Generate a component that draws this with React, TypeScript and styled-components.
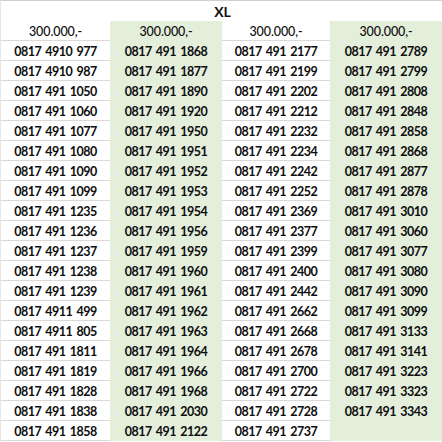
import React from "react";
import styled, { createGlobalStyle } from "styled-components";

const GlobalStyle = createGlobalStyle`
    html, body {
        margin: 0;
        padding: 0;
        background: #ffffff;
    }
    body {
        font-family: Lato, "Liberation Sans", sans-serif;
        color: #111111;
    }
`;

const prefix = "0817 491 ";

const columns: { shaded: boolean; numbers: string[] }[] = [
    {
        shaded: false,
        numbers: [
            "0817 4910 977",
            "0817 4910 987",
            ...["1050", "1060", "1077", "1080", "1090", "1099", "1235", "1236", "1237", "1238", "1239"].map(
                (n) => prefix + n
            ),
            "0817 4911 499",
            "0817 4911 805",
            ...["1811", "1819", "1828", "1838", "1858"].map((n) => prefix + n),
        ],
    },
    {
        shaded: true,
        numbers: [
            "1868", "1877", "1890", "1920", "1950", "1951", "1952", "1953", "1954", "1956",
            "1959", "1960", "1961", "1962", "1963", "1964", "1966", "1968", "2030", "2122",
        ].map((n) => prefix + n),
    },
    {
        shaded: false,
        numbers: [
            "2177", "2199", "2202", "2212", "2232", "2234", "2242", "2252", "2369", "2377",
            "2399", "2400", "2442", "2662", "2668", "2678", "2700", "2722", "2728", "2737",
        ].map((n) => prefix + n),
    },
    {
        shaded: true,
        numbers: [
            ...[
                "2789", "2799", "2808", "2848", "2858", "2868", "2877", "2878", "3010", "3060",
                "3077", "3080", "3090", "3099", "3133", "3141", "3223", "3323", "3343",
            ].map((n) => prefix + n),
            "",
        ],
    },
];

export default function App() {
    return (
        <>
            <GlobalStyle />
            <Sheet>
                <Title>XL</Title>
                <Grid>
                    {columns.map((col, i) => (
                        <Column key={i} $shaded={col.shaded}>
                            <Cell $shaded={col.shaded} $header>
                                300.000,-
                            </Cell>
                            {col.numbers.map((num, j) => (
                                <Cell key={j} $shaded={col.shaded}>
                                    {num}
                                </Cell>
                            ))}
                        </Column>
                    ))}
                </Grid>
            </Sheet>
        </>
    );
}

const Sheet = styled.div`
    width: 442px;
    height: 442px;
    box-sizing: border-box;
    border-top: 1px solid #d0d0d0;
    border-left: 1px solid #e6e6e6;
    overflow: hidden;
`;

const Title = styled.div`
    height: 20px;
    display: flex;
    align-items: center;
    justify-content: center;
    font-size: 14px;
    font-weight: 700;
    padding-left: 2px;
`;

const Grid = styled.div`
    display: grid;
    grid-template-columns: 109px 112px 108px 112px;
`;

const Column = styled.div<{ $shaded: boolean }>`
    display: flex;
    flex-direction: column;
    background: ${(p) => (p.$shaded ? "#e3eedb" : "#ffffff")};
`;

const Cell = styled.div<{ $shaded: boolean; $header?: boolean }>`
    height: 20px;
    box-sizing: border-box;
    display: flex;
    align-items: center;
    justify-content: center;
    font-size: ${(p) => (p.$header ? "12.5px" : "12.5px")};
    font-weight: ${(p) => (p.$header ? 500 : 700)};
    letter-spacing: ${(p) => (p.$header ? "-0.1px" : "-0.5px")};
    word-spacing: ${(p) => (p.$header ? "0" : "1.5px")};
    color: #0d0d0d;
    border-bottom: 1px solid ${(p) => (p.$shaded ? "transparent" : "#d9d9d9")};
    padding-top: 1px;
`;
